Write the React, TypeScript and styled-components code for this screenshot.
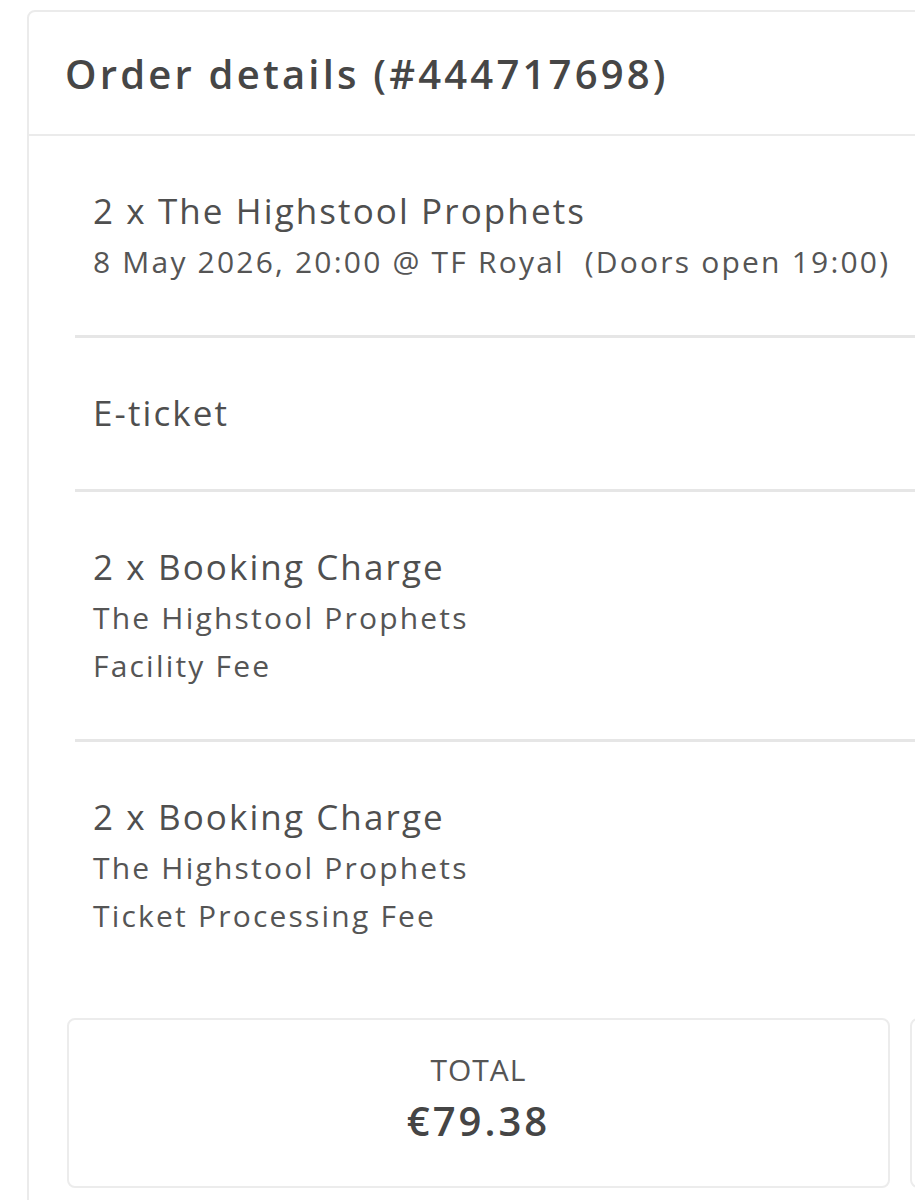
import React from 'react';
import styled, { createGlobalStyle } from 'styled-components';

const GlobalStyle = createGlobalStyle`
  html, body {
    margin: 0;
    padding: 0;
    background: #fff;
    overflow: hidden;
  }
  body {
    font-family: "Open Sans", "Liberation Sans", sans-serif;
    color: #555;
  }
`;

const Page = styled.div`
  padding: 10px 0 0 27px;
  width: 1100px;
`;

const Card = styled.section`
  border: 2px solid #ebebeb;
  border-radius: 8px;
  background: #fff;
`;

const Header = styled.header`
  height: 122px;
  display: flex;
  align-items: center;
  padding-left: 36px;
  border-bottom: 2px solid #ebebeb;
`;

const Title = styled.h2`
  margin: 0;
  font-size: 40px;
  font-weight: 600;
  letter-spacing: 3.2px;
  color: #464646;
`;

const Body = styled.div`
  padding: 0 0 40px 46px;
`;

const List = styled.div`
  display: flex;
  flex-direction: column;
`;

const Item = styled.div`
  padding: 48px 0 49px 18px;
  border-bottom: 3px solid #e6e6e6;

  &:last-child {
    border-bottom: none;
  }
`;

const ItemName = styled.div`
  font-size: 35px;
  line-height: 54px;
  letter-spacing: 2.1px;
  color: #4f4f4f;
`;

const ItemSub = styled.div`
  font-size: 30px;
  line-height: 48px;
  letter-spacing: 2.2px;
  color: #555;
  white-space: pre;
`;

const Totals = styled.div`
  display: grid;
  grid-template-columns: 823px 823px;
  gap: 20px;
  margin: 29px 0 0 -8px;
`;

const TotalBox = styled.div`
  height: 155px;
  padding-bottom: 11px;
  border: 2px solid #ececec;
  border-radius: 8px;
  display: flex;
  flex-direction: column;
  align-items: center;
  justify-content: center;
`;

const TotalLabel = styled.div`
  font-size: 30px;
  line-height: 44px;
  letter-spacing: 1px;
  color: #555;
`;

const TotalValue = styled.div`
  margin-top: 3px;
  font-size: 40px;
  line-height: 52px;
  font-weight: 600;
  letter-spacing: 3px;
  color: #454545;
`;

type Line = { name: string; subs: string[] };

const lines: Line[] = [
  { name: '2 x The Highstool Prophets', subs: ['8 May 2026, 20:00 @ TF Royal  (Doors open 19:00)'] },
  { name: 'E-ticket', subs: [] },
  { name: '2 x Booking Charge', subs: ['The Highstool Prophets', 'Facility Fee'] },
  { name: '2 x Booking Charge', subs: ['The Highstool Prophets', 'Ticket Processing Fee'] },
];

export default function App() {
  return (
    <Page>
      <GlobalStyle />
      <Card>
        <Header>
          <Title>Order details (#444717698)</Title>
        </Header>
        <Body>
          <List>
            {lines.map((l, i) => (
              <Item key={i}>
                <ItemName>{l.name}</ItemName>
                {l.subs.map((s, j) => (
                  <ItemSub key={j}>{s}</ItemSub>
                ))}
              </Item>
            ))}
          </List>
          <Totals>
            <TotalBox>
              <TotalLabel>TOTAL</TotalLabel>
              <TotalValue>€79.38</TotalValue>
            </TotalBox>
            <TotalBox />
          </Totals>
        </Body>
      </Card>
    </Page>
  );
}
